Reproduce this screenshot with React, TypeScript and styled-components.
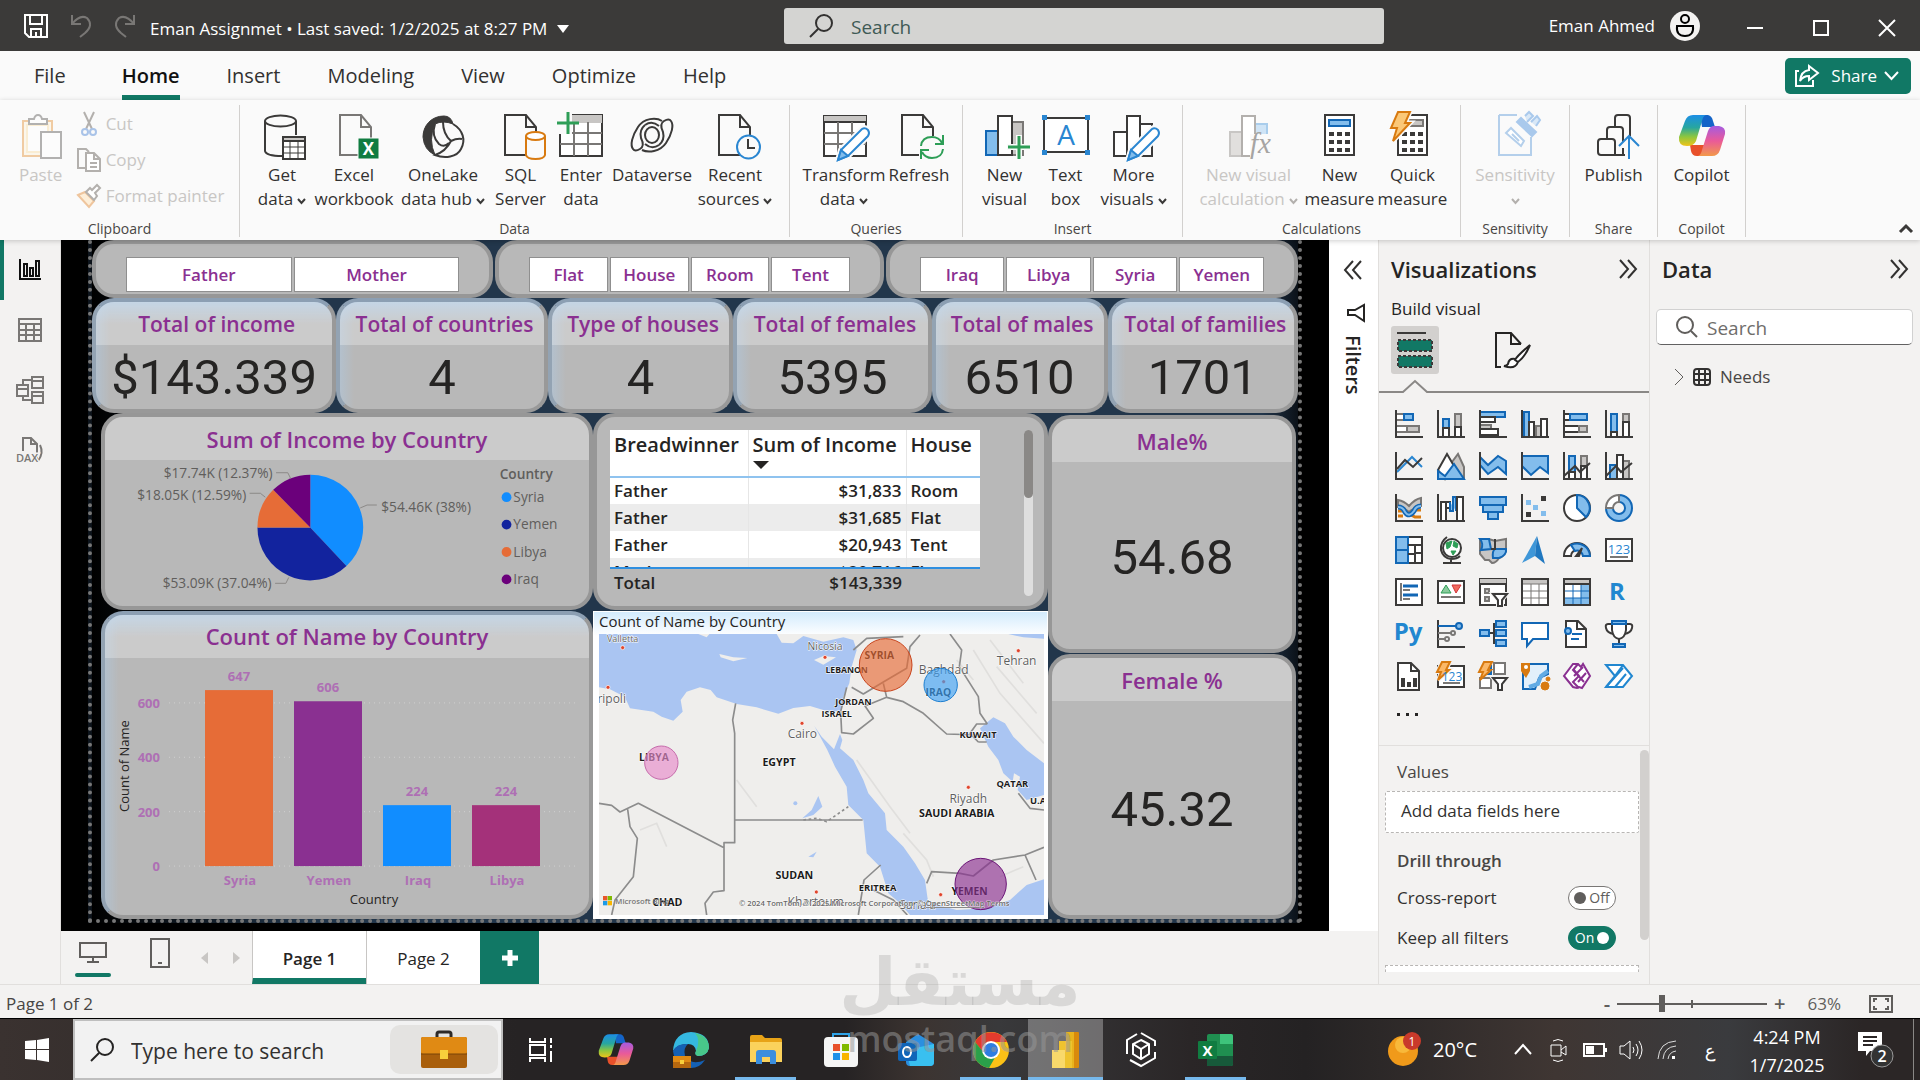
import React from 'react';
import styled, { createGlobalStyle, css } from 'styled-components';

const INK = '#3b3a39';
const BLUE = '#1267b5';
const SKY = '#83bdec';
const GREY = '#797775';
const SILVER = '#c8c6c4';
const GREEN = '#117865';
const PURPLE = '#8a3091';
const ORANGE = '#d87a10';

const GlobalStyle = createGlobalStyle`
  *, *::before, *::after { box-sizing: border-box; }
  body { margin: 0; background: #f3f2f1; }
  body, button, input, table { font-family: 'Open Sans', 'Noto Sans', 'DejaVu Sans', sans-serif; }
  button { border: 0; padding: 0; background: none; color: inherit; font-size: inherit; cursor: pointer; }
  svg { display: block; overflow: visible; flex: none; }
`;

/* ---------- drawing helpers ---------- */

type Shape = [d: string, fill?: string, stroke?: string, width?: number];

const Shapes = ({ list, width = 2 }: { list: Shape[]; width?: number }) => (
  <>
    {list.map(([d, fill, stroke, w], i) => (
      <path key={i} d={d} fill={fill || 'none'} stroke={stroke || INK} strokeWidth={w ?? width} />
    ))}
  </>
);

const Icon = ({ w, h, box, list, width, children }: { w: number; h: number; box?: string; list?: Shape[]; width?: number; children?: React.ReactNode }) => (
  <svg width={w} height={h} viewBox={box || `0 0 ${w} ${h}`} aria-hidden="true">
    {list && <Shapes list={list} width={width} />}
    {children}
  </svg>
);

/* ---------- shell ---------- */

const Shell = styled.div`
  position: relative;
  min-height: 100vh;
  display: flex;
  flex-direction: column;
  color: #252423;
  font-size: 17px;
  line-height: 24px;
  overflow: hidden;
`;

const TitleBar = styled.header`
  height: 51px;
  background: ${INK};
  color: #fff;
  display: grid;
  grid-template-columns: 784fr 600fr 536fr;
  align-items: center;
`;

const TitleLeft = styled.div`
  display: flex;
  align-items: center;
  gap: 22px;
  padding-left: 24px;
`;

const FileName = styled.button`
  display: flex;
  align-items: center;
  gap: 10px;
  margin-left: -8px;
  padding-top: 6px;
  font-size: 17px;
  white-space: nowrap;
`;

const TitleSearch = styled.label`
  height: 36px;
  border-radius: 3px;
  background: #d4d4d2;
  display: flex;
  align-items: center;
  gap: 18px;
  padding-left: 25px;
`;

const PlainInput = styled.input<{ $size: number; $tone: string }>`
  flex: 1;
  min-width: 0;
  border: 0;
  outline: 0;
  background: transparent;
  padding: 2px 0 0;
  font-size: ${p => p.$size}px;
  color: ${p => p.$tone};
  &::placeholder { color: ${p => p.$tone}; opacity: 1; }
`;

const TitleRight = styled.div`
  display: flex;
  justify-content: flex-end;
  align-items: center;
`;

const Account = styled.button`
  display: flex;
  align-items: center;
  gap: 15px;
  margin-right: 22px;
`;

const WindowButton = styled.button`
  width: 66px;
  height: 51px;
  padding-top: 4px;
  display: grid;
  place-items: center;
`;

/* ---------- ribbon ---------- */

const TabRow = styled.nav`
  height: 49px;
  background: #fafafa;
  display: flex;
  align-items: center;
  padding: 0 9px 0 34px;
`;

const TabList = styled.div`
  flex: 1;
  display: flex;
  gap: 47px;
`;

const RibbonTab = styled.button<{ $active?: boolean }>`
  height: 49px;
  padding-top: 5px;
  font-size: 20px;
  color: ${p => (p.$active ? '#111' : '#323130')};
  font-weight: ${p => (p.$active ? 600 : 400)};
  border-bottom: 5px solid ${p => (p.$active ? GREEN : 'transparent')};
  &:first-child { margin-right: 9px; }
`;

const ShareButton = styled.button`
  height: 36px;
  padding: 0 12px 0 10px;
  border-radius: 5px;
  background: ${GREEN};
  color: #fff;
  display: flex;
  align-items: center;
  gap: 7px;
  span { margin-left: 5px; }
`;

const Ribbon = styled.section`
  position: relative;
  z-index: 1;
  height: 140px;
  padding: 5px 0 3px;
  background: #fafafa;
  display: flex;
  box-shadow: 0 1px 5px rgba(0, 0, 0, 0.2);
`;

const Group = styled.div<{ $width: number }>`
  width: ${p => p.$width}px;
  border-right: 1px solid #d2d0ce;
  display: flex;
  flex-direction: column;
  align-items: center;
  justify-content: space-between;
`;

const GroupItems = styled.div`
  display: flex;
  padding-top: 7px;
`;

const GroupName = styled.div`
  font-size: 14px;
  line-height: 16px;
  color: #484644;
`;

const Command = styled.button<{ $width: number; $off?: boolean }>`
  width: ${p => p.$width}px;
  display: flex;
  flex-direction: column;
  align-items: center;
  font-size: 17px;
  line-height: 24px;
  color: ${p => (p.$off ? '#c8c6c4' : '#323130')};
  svg { margin-bottom: 3px; }
  span { white-space: nowrap; display: flex; align-items: center; gap: 4px; min-height: 24px; }
  span svg { margin: 3px 0 0; }
`;

const SmallCommands = styled.div`
  display: flex;
  flex-direction: column;
  gap: 12px;
  padding: 0 0 0 10px;
`;

const SmallCommand = styled.button`
  display: flex;
  align-items: center;
  gap: 5px;
  line-height: 24px;
  color: #c8c6c4;
`;

const Collapse = styled.button`
  margin: auto 7px 4px auto;
`;

/* ---------- workspace ---------- */

const Workspace = styled.main`
  flex: 1;
  display: grid;
  grid-template-columns: 61px minmax(0, 1fr) 271px 271px;
  background: #f3f2f1;
`;

const Rail = styled.nav`
  border-right: 1px solid #e1dfdd;
  display: flex;
  flex-direction: column;
`;

const RailButton = styled.button<{ $active?: boolean }>`
  height: 60px;
  border-left: 4px solid ${p => (p.$active ? GREEN : 'transparent')};
  padding-right: 4px;
  display: grid;
  place-items: center;
`;

const Center = styled.div`
  display: flex;
  flex-direction: column;
`;

const CanvasRow = styled.div`
  flex: 1;
  display: flex;
`;

const Canvas = styled.div`
  flex: 1;
  background: #000;
  padding: 0 27px 8px;
  display: flex;
`;

const ReportPage = styled.div`
  flex: 1;
  border: 4px dotted #777;
  border-top: 0;
  background: linear-gradient(90deg, #000 0, #22364b 18%, #22364b 97%, #0b1118 100%);
  display: flex;
  flex-direction: column;
`;

const FiltersPane = styled.aside`
  width: 49px;
  background: #fff;
  display: flex;
  flex-direction: column;
  align-items: center;
  gap: 20px;
  padding: 20px 2px 0 0;
`;

const VerticalLabel = styled.div`
  writing-mode: vertical-rl;
  font-size: 20px;
  font-weight: 600;
  margin-top: -7px;
`;

const FunnelSlot = styled.div`
  padding: 4px 0 0 6px;
`;

/* ---------- report cards ---------- */

const Row = styled.div<{ $height: number; $gap?: number }>`
  height: ${p => p.$height}px;
  display: flex;
  gap: ${p => p.$gap || 0}px;
`;

const glow = css`
  background-image: linear-gradient(180deg, rgba(172, 205, 236, 0.7), rgba(172, 205, 236, 0) 22px),
    linear-gradient(90deg, rgba(172, 205, 236, 0.4), rgba(172, 205, 236, 0) 14px);
  border-color: #8c9fb3 #999 #999 #93a3b3;
`;

const Card = styled.section<{ $grow: number; $glow?: boolean }>`
  flex: ${p => p.$grow} 1 0;
  min-width: 0;
  min-height: 0;
  border: 4px solid #979797;
  border-radius: 22px;
  background-color: #b8b8b8;
  display: flex;
  flex-direction: column;
  overflow: hidden;
  ${p => p.$glow && glow}
`;

const CardTitle = styled.h2<{ $compact?: boolean }>`
  margin: 0;
  padding-left: ${p => (p.$compact ? 5 : 0)}px;
  height: 43px;
  flex: none;
  display: grid;
  place-items: center;
  background: rgba(255, 255, 255, 0.27);
  color: ${PURPLE};
  font-size: ${p => (p.$compact ? 21 : 22)}px;
  line-height: 28px;
  font-weight: 600;
  white-space: nowrap;
`;

const Figure = styled.div<{ $tall?: boolean }>`
  flex: 1;
  display: grid;
  place-items: center;
  padding-top: ${p => (p.$tall ? 4 : 1)}px;
  font-family: Roboto, 'Open Sans', sans-serif;
  font-size: 49px;
  line-height: 52px;
  color: #252423;
`;

const Slicer = styled.div<{ $inset: number }>`
  display: flex;
  gap: 2px;
  padding: 13px ${p => p.$inset}px 0;
`;

const SlicerButton = styled.button`
  flex: 1;
  height: 35px;
  background: #fff;
  border: 1px solid #8f8f8f;
  color: ${PURPLE};
  font-size: 17px;
  font-weight: 600;
`;

const Board = styled.div`
  flex: 1;
  display: flex;
  padding: 0 2px 0 9px;
`;

const Column = styled.div<{ $grow: number; $top?: number }>`
  flex: ${p => p.$grow} 1 0;
  min-width: 0;
  display: flex;
  flex-direction: column;
  gap: 1px;
  padding-top: ${p => p.$top || 0}px;
`;

const Chart = styled.svg`
  flex: 1;
  min-height: 0;
  width: 100%;
  text { font-family: 'Open Sans', 'Noto Sans', sans-serif; }
`;

const TableBody = styled.div`
  flex: 1;
  display: flex;
  align-items: flex-start;
  justify-content: space-between;
  padding: 13px 11px 0 13px;
`;

const DataTable = styled.table`
  width: 370px;
  border-collapse: collapse;
  font-weight: 600;
  font-size: 17px;
  line-height: 24px;
  text-align: left;
  th { font-size: 20px; font-weight: 600; vertical-align: top; height: 47px; padding: 3px 4px 0; background: #fff; border-bottom: 2px solid #8fc3ef; line-height: 24px; white-space: nowrap; }
  th svg { margin: 4px 0 0; }
  td { height: 27px; padding: 0 4px; background: #fff; }
  tbody tr:nth-child(even) td { background: #ececec; }
  td + td, th + th { border-left: 1px solid #e6e6e6; }
  td:nth-child(2) { text-align: right; }
  tfoot td { background: transparent; border: 0 !important; height: 28px; }
`;

const Clipped = styled.div`
  height: 9px;
  line-height: 28px;
  overflow: hidden;
`;

const LastRow = styled.tr`
  td { height: 10px; border-bottom: 2px solid #2f8fe0; }
`;

const ScrollTrack = styled.div<{ $w: number; $tone: string }>`
  width: ${p => p.$w}px;
  border-radius: 5px;
  background: ${p => p.$tone};
`;

const TableTrack = styled(ScrollTrack)`
  height: 166px;
`;

const Thumb = styled.div<{ $h: number; $tone: string }>`
  height: ${p => p.$h}px;
  border-radius: 5px;
  background: ${p => p.$tone};
`;

const MapCard = styled.section`
  flex: 311 1 0;
  min-height: 0;
  background: linear-gradient(180deg, #d3ebfd, #fff 24px);
  border: 1px solid #fff;
  padding: 0 3px 3px 5px;
  display: flex;
  flex-direction: column;
  h2 { margin: 0; padding-bottom: 4px; font-size: 15px; line-height: 18px; font-weight: 400; }
`;

const MapArt = styled.svg`
  flex: 1;
  min-height: 0;
  width: 100%;
  overflow: hidden;
  text { font-family: 'Open Sans', 'Noto Sans', sans-serif; }
`;

/* ---------- page tabs and status ---------- */

const PageTabs = styled.nav`
  height: 53px;
  display: flex;
  align-items: stretch;
`;

const Layouts = styled.div`
  display: flex;
  gap: 31px;
  padding: 0 10px 0 14px;
`;

const ViewButton = styled.button<{ $active?: boolean }>`
  width: 36px;
  padding-top: 7px;
  display: flex;
  flex-direction: column;
  align-items: center;
  justify-content: space-between;
  &::after { content: ''; width: 36px; height: 4px; margin-bottom: 7px; border-radius: 2px; background: ${p => (p.$active ? GREEN : 'transparent')}; }
`;

const Pager = styled.button`
  width: 32px;
  display: grid;
  place-items: center;
`;

const PageTab = styled.button<{ $active?: boolean }>`
  width: 114px;
  background: #fff;
  border-left: 1px solid #c8c6c4;
  padding-top: ${p => (p.$active ? 8 : 2)}px;
  font-weight: ${p => (p.$active ? 600 : 400)};
  border-bottom: ${p => (p.$active ? `6px solid ${GREEN}` : 0)};
`;

const AddPage = styled.button`
  width: 59px;
  background: ${GREEN};
  display: grid;
  place-items: center;
`;

const StatusBar = styled.footer`
  height: 35px;
  border-top: 1px solid #e1dfdd;
  border-bottom: 1px solid #000;
  background: #f3f2f1;
  display: flex;
  align-items: center;
  padding: 4px 27px 0 6px;
  color: #484644;
`;

const ZoomTools = styled.div`
  margin-left: auto;
  display: flex;
  align-items: center;
  gap: 7px;
  color: #605e5c;
  button { font-size: 20px; font-weight: 600; }
  output { margin: 0 21px 0 15px; }
`;

const ZoomSlider = styled.input`
  appearance: none;
  width: 150px;
  height: 17px;
  margin: 0;
  background: linear-gradient(#605e5c, #605e5c) 50% 50% / 100% 2px no-repeat,
    linear-gradient(#605e5c, #605e5c) 50% 50% / 2px 8px no-repeat;
  &::-webkit-slider-thumb { appearance: none; width: 6px; height: 17px; background: #605e5c; }
`;

/* ---------- side panes ---------- */

const Pane = styled.aside`
  border-left: 1px solid #e1dfdd;
  display: flex;
  flex-direction: column;
`;

const PaneHead = styled.div`
  display: flex;
  align-items: center;
  justify-content: space-between;
  padding: 14px 12px 0;
  h2 { margin: 0; font-size: 22px; line-height: 30px; font-weight: 600; }
`;

const BuildLabel = styled.div`
  padding: 13px 12px 5px;
`;

const ModeButtons = styled.div`
  display: flex;
  gap: 50px;
  padding-left: 12px;
`;

const ModeButton = styled.button<{ $active?: boolean }>`
  width: 48px;
  height: 48px;
  border-radius: 3px;
  background: ${p => (p.$active ? '#d2d0ce' : 'transparent')};
  display: grid;
  place-items: center;
`;

const Gallery = styled.div`
  display: grid;
  grid-template-columns: repeat(6, 28px);
  gap: 14px;
  padding: 23px 0 0 16px;
`;

const Dots = styled.button`
  align-self: flex-start;
  margin: 23px 0 28px 18px;
`;

const Wells = styled.div`
  flex: 1;
  border-top: 1px solid #e1dfdd;
  display: flex;
  justify-content: space-between;
  padding: 4px 0 12px 6px;
`;

const WellList = styled.div`
  width: 254px;
  display: flex;
  flex-direction: column;
  color: #323130;
  overflow: hidden;
`;

const WellLabel = styled.div<{ $strong?: boolean }>`
  padding: ${p => (p.$strong ? '16px 12px 13px' : '10px 12px 7px')};
  font-weight: ${p => (p.$strong ? 600 : 400)};
  color: #484644;
`;

const DropBox = styled.div`
  height: 42px;
  border: 1px dashed #b8b6b4;
  border-radius: 2px;
  background: #fff;
  padding: 7px 15px;
`;

const CutBox = styled.div`
  height: 7px;
  margin-top: 15px;
  border: 1px dashed #b8b6b4;
  border-bottom: 0;
  background: #fff;
`;

const ToggleRow = styled.label`
  height: 24px;
  margin-bottom: 16px;
  padding: 0 23px 0 12px;
  display: flex;
  align-items: center;
  justify-content: space-between;
  & + & { margin-bottom: 0; }
`;

const ToggleInput = styled.input`
  position: absolute;
  opacity: 0;
`;

const Toggle = styled.span<{ $on?: boolean }>`
  width: 48px;
  height: 24px;
  border-radius: 12px;
  border: 1px solid ${p => (p.$on ? GREEN : '#797775')};
  background: ${p => (p.$on ? GREEN : '#fff')};
  color: ${p => (p.$on ? '#fff' : '#605e5c')};
  font-size: 14px;
  line-height: 20px;
  display: flex;
  flex-direction: ${p => (p.$on ? 'row-reverse' : 'row')};
  align-items: center;
  justify-content: center;
  gap: 3px;
  &::before { content: ''; width: 12px; height: 12px; border-radius: 50%; background: ${p => (p.$on ? '#fff' : '#605e5c')}; }
`;

const SearchField = styled.label`
  margin: 25px 7px 20px 6px;
  height: 36px;
  border: 1px solid #d1d1d1;
  border-bottom-color: #616161;
  border-radius: 5px;
  background: #fff;
  display: flex;
  align-items: center;
  gap: 8px;
  padding-left: 18px;
`;

const TreeItem = styled.button`
  display: flex;
  align-items: center;
  gap: 9px;
  padding-left: 24px;
  line-height: 24px;
  color: #484644;
`;

/* ---------- taskbar ---------- */

const Taskbar = styled.footer`
  height: 61px;
  background: linear-gradient(90deg, #3a3230 0, #262324 27%, #262324 44%, #3c3431 48%, #39393b 52%, #2a2627 62%, #242223 68%, #3f3633 81%, #3a3b3e 90%, #2b2626 97%);
  color: #fff;
  display: flex;
`;

const StartButton = styled.button`
  width: 73px;
  display: grid;
  place-items: center;
`;

const TaskSearch = styled.label`
  width: 430px;
  background: #f2f2f2;
  border: 2px solid #bfbfbf;
  display: flex;
  align-items: center;
  gap: 17px;
  padding: 0 3px 0 15px;
`;

const Briefcase = styled.span`
  width: 108px;
  height: 49px;
  border-radius: 10px;
  background: #e4e3e1;
  display: grid;
  place-items: center;
`;

const TaskButton = styled.button<{ $open?: boolean; $current?: boolean }>`
  width: 75px;
  display: grid;
  place-items: center;
  position: relative;
  background: ${p => (p.$current ? 'rgba(255,255,255,0.3)' : 'transparent')};
  &::after {
    content: '';
    position: absolute;
    bottom: 0;
    left: ${p => (p.$current ? 0 : 7)}px;
    right: ${p => (p.$current ? 0 : 7)}px;
    height: 3px;
    background: ${p => (p.$open ? '#76b9ed' : 'transparent')};
  }
`;

const Tray = styled.div`
  margin-left: auto;
  display: flex;
  align-items: center;
`;

const Weather = styled.button`
  display: flex;
  align-items: center;
  gap: 12px;
  margin-right: 28px;
  font-size: 20px;
`;

const TrayButton = styled.button`
  width: 36px;
  height: 61px;
  display: grid;
  place-items: center;
  font-size: 18px;
`;

const TrayLanguage = styled(TrayButton)`
  width: 50px;
`;

const Clock = styled.button`
  width: 104px;
  padding-top: 2px;
  font-size: 18px;
  line-height: 28px;
`;

const Notify = styled.button`
  width: 75px;
  height: 61px;
  display: grid;
  place-items: center;
  border-right: 1px solid #8a8886;
  margin-right: 6px;
`;

const Watermark = styled.div`
  position: absolute;
  left: 50%;
  bottom: 22px;
  transform: translateX(-50%);
  display: flex;
  flex-direction: column;
  align-items: center;
  pointer-events: none;
  color: rgba(140, 140, 140, 0.25);
  font-weight: 700;
  font-family: 'DejaVu Sans', sans-serif;
  font-size: 66px;
  line-height: 74px;
  z-index: 3;
  b { font-family: 'Open Sans', sans-serif; font-size: 36px; line-height: 38px; font-weight: 600; color: rgba(150, 150, 150, 0.55); }
`;

/* ---------- ribbon icons ---------- */

const doc = (x: number): string => `M${x} 3H${x + 21}L${x + 31} 15V43H${x}ZM${x + 21} 3V15H${x + 31}`;
const PENCIL: Shape[] = [
  ['M18 48L21 38L42 17Q45 15 48 18Q50 21 48 24L28 44Z', '#fff', '#fafafa', 6],
  ['M18 48L21 38L42 17Q45 15 48 18Q50 21 48 24L28 44Z', '#fff', '#2a86d1'],
  ['M18 48L21 38L28 44Z', SKY, '#2a86d1'],
];
const KEYS = 'M13 20h5v4h-5zM21 20h5v4h-5zM29 20h5v4h-5zM13 28h5v4h-5zM21 28h5v4h-5zM29 28h5v4h-5zM13 36h5v4h-5zM21 36h5v4h-5zM29 36h5v4h-5z';
const BOLT = 'M9 0H21L16 11H21L4 29L8 16H2Z';

const CopilotArt = ({ id }: { id: string }) => (
  <>
    <defs>
      <linearGradient id={`${id}a`} x1="0" y1="0" x2="0" y2="1">
        <stop offset="0" stopColor="#1c8ee6" /><stop offset="0.4" stopColor="#27a6a0" /><stop offset="0.7" stopColor="#8cc63f" /><stop offset="1" stopColor="#f0c419" />
      </linearGradient>
      <linearGradient id={`${id}b`} x1="0" y1="0" x2="0" y2="1">
        <stop offset="0" stopColor="#a55be0" /><stop offset="0.5" stopColor="#ea5a98" /><stop offset="1" stopColor="#f2994a" />
      </linearGradient>
    </defs>
    <path d="M12 33H30L27 41Q26 44 22 44H19Q14 44 13 39Z" fill="#e8502a" />
    <path d="M22 3H30Q34 4 35 9L37 15H24Z" fill="#1464c8" />
    <path d="M28 3Q25 4 24 9L18 29Q16 34 9 34Q0 34 1 25L7 9Q9 3 15 3Z" fill={`url(#${id}a)`} />
    <path d="M20 44Q23 43 24 38L30 19Q32 14 36 14H41Q48 15 47 22L42 38Q40 44 34 44Z" fill={`url(#${id}b)`} />
  </>
);

const RIBBON: Record<string, React.ReactNode> = {
  getData: <Shapes list={[
    ['M7 9V39Q8 44 24 44M38 9V23'], ['M7 9A15.500 5.500 0 0 1 38 9A15.500 5.500 0 0 1 7 9Z'],
    ['M25 25H47V47H25Z', '#fff'], ['M25 25H47V29H25Z', SILVER], ['M32 29V47M40 29V47M25 35H47M25 41H47', '', INK, 1],
  ]} />,
  excel: <><Shapes list={[[doc(10), '', GREY]]} /><rect x="28" y="26" width="21" height="21" fill="#107c41" stroke="#fafafa" /><text x="38.500" y="43" textAnchor="middle" fontSize="17" fontWeight="700" fill="#fff">X</text></>,
  onelake: <Shapes list={[
    ['M25 4C12 4 4 14 4 25Q5 38 16 43Q9 28 16 12Q24 8 34 12Q32 4 25 4Z', INK, INK, 1],
    ['M34 12C44 18 47 28 42 37C38 45 26 47 16 43C22 41 28 37 32 29Q38 26 43 27M16 12Q12 24 20 32Q25 36 30 31M24 10Q24 22 32 29'],
  ]} />,
  sql: <Shapes list={[[doc(8)], ['M29 24V43Q30 47 38.500 47Q47 47 48 43V24', '#fafafa', ORANGE], ['M29 24A9.500 4 0 0 1 48 24A9.500 4 0 0 1 29 24Z', '#fff', ORANGE]]} />,
  enter: <Shapes list={[
    ['M3 3H45V44H3Z', '#fff'], ['M4 4H44V10H4Z', SILVER, SILVER], ['M17 10V44M31 10V44M3 21H45M3 32H45', '', GREY],
    ['M0 0H15V22H0Z', '#fafafa', '#fafafa', 0], ['M11 0V22M0 11H22', '', '#2e9e57', 3],
  ]} />,
  dataverse: <Shapes list={[
    ['M14 38C20 41 32 40 38 31C44 22 46 13 43 9Q41 6 36 9Q31 12 35 20Q37 28 31 33'],
    ['M34 9C28 5 16 6 10 15C4 24 2 33 5 37Q7 40 12 37Q17 34 13 26Q11 18 17 13'],
    ['M17 13Q24 8 31 14M31 33Q24 38 17 32'],
    ['M17 23A7 8 0 0 1 31 23A7 8 0 0 1 17 23Z'],
  ]} />,
  recent: <Shapes list={[[doc(8)], ['M26 35A11 11 0 0 1 49 35A11 11 0 0 1 26 35Z', '#fafafa', '#2a86d1'], ['M37 27V36H44']]} />,
  transform: <Shapes list={[['M4 4H46V44H4Z', '#fff'], ['M5 5H45V10H5Z', SILVER, SILVER], ['M4 10H46'], ['M18 10V44M32 10V44M4 21H46M4 32H46', '', GREY], ...PENCIL]} />,
  refresh: <><Shapes list={[[doc(7)], ['M24 24H50V47H24Z', '#fafafa', '#fafafa', 0], ['M26 34Q27 25 37 25Q44 25 47 31M48 23V32H40M48 37Q47 46 37 46Q30 46 27 40M26 47V38H34', '', '#2e9e57']]} /></>,
  newVisual: <Shapes list={[['M5 19H18V43H5Z', SKY, BLUE], ['M31 10H42V43H31Z', SILVER, GREY], ['M17 4H31V43H17Z', '#fff'], ['M38 23V48M26 35H50', '', '#fafafa', 6], ['M38 24V47M27 35H49', '', '#2e9e57', 3]]} />,
  textBox: <><Shapes list={[['M2 6H46V40H2Z', '#fff'], ['M1 4h3v3h-3zM44 4h3v3h-3zM1 39h3v3h-3zM44 39h3v3h-3z', '#2a86d1', '#2a86d1']]} /><text x="24" y="33" textAnchor="middle" fontSize="28" fill="#2a86d1">A</text></>,
  more: <Shapes list={[['M4 20H17V44H4Z', '#fff'], ['M30 12H42V44H30Z', '#fff'], ['M17 4H30V44H17Z', '#fff'], ...PENCIL]} />,
  visualCalc: <><Shapes list={[['M5 20H17V44H5Z', '#e1dfdd', SILVER], ['M30 12H42V26H30Z', '#cfe4f6', '#a9cdec'], ['M17 4H30V44H17Z', '#fff', '#b3b0ad']]} /><rect x="25" y="22" width="24" height="26" fill="#fafafa" /><text x="25" y="41" fontSize="29" fontStyle="italic" fontFamily="Liberation Serif, serif" fill="#a6a4a2">fx</text></>,
  calc: <Shapes list={[['M9 3H38V43H9Z', '#fff'], ['M13 8H34V14H13Z', SKY, BLUE], [KEYS, INK, INK, 0]]} />,
  quick: <Shapes list={[['M9 3H38V43H9Z', '#fff'], ['M13 8H34V14H13Z', SILVER, GREY], [KEYS, INK, INK, 0], [BOLT, '#fafafa', '#fafafa', 5], [BOLT, '#fbc878', ORANGE]]} />,
  sensitivity: <Shapes list={[['M8 3H26M40 25V43H8V3', '#fafafa', '#b4cfeb'], ['M15 21L20 16L33 29L30 34Z', '#fff', '#b4cfeb'], ['M21 22L28 29', '', '#b4cfeb'], ['M26 10L30 6L45 20L41 24Z', '#a9c9ec', '#a9c9ec'], ['M34 4L38 0L42 4L36 10M40 10L46 4L49 8L45 14', '#d9e8f7', '#a9c9ec']]} />,
  publish: <Shapes list={[['M25 15V6Q25 3 28 3H37Q40 3 40 6V24M17 27V18Q17 15 20 15H30Q33 15 33 18V30M25 43V30Q25 27 22 27H11Q8 27 8 30V40Q8 43 11 43H35M33 36V43'], ['M39 47V25M29 34L39 24L49 34', '', '#2a86d1']]} />,
  copilot: <CopilotArt id="rb" />,
  paste: <g opacity="0.55"><Shapes list={[['M6 9H35V44H6Z', '#fdf3e0', '#e9a55b'], ['M10 13H31V40H10Z', '#fff', '#fbe3b5'], ['M12 12V7H17Q18 3 21 3Q24 3 25 7H30V12Z', '#fff', GREY], ['M24 20H44V46H24Z', '#fff', GREY]]} /></g>,
};

type Cmd = [icon: string, width: number, lines: string[], caret?: boolean, off?: boolean];
const GROUPS: { name: string; width: number; cmds: Cmd[] }[] = [
  { name: 'Data', width: 550, cmds: [['getData', 60, ['Get', 'data'], true], ['excel', 84, ['Excel', 'workbook']], ['onelake', 94, ['OneLake', 'data hub'], true], ['sql', 61, ['SQL', 'Server']], ['enter', 60, ['Enter', 'data']], ['dataverse', 82, ['Dataverse']], ['recent', 84, ['Recent', 'sources'], true]] },
  { name: 'Queries', width: 173, cmds: [['transform', 86, ['Transform', 'data'], true], ['refresh', 64, ['Refresh']]] },
  { name: 'Insert', width: 220, cmds: [['newVisual', 60, ['New', 'visual']], ['textBox', 62, ['Text', 'box']], ['more', 74, ['More', 'visuals'], true]] },
  { name: 'Calculations', width: 278, cmds: [['visualCalc', 112, ['New visual', 'calculation'], true, true], ['calc', 70, ['New', 'measure']], ['quick', 76, ['Quick', 'measure']]] },
  { name: 'Sensitivity', width: 109, cmds: [['sensitivity', 100, ['Sensitivity', ''], true, true]] },
  { name: 'Share', width: 88, cmds: [['publish', 80, ['Publish']]] },
  { name: 'Copilot', width: 88, cmds: [['copilot', 80, ['Copilot']]] },
];

const Caret = ({ tone = INK }: { tone?: string }) => <Icon w={9} h={6} list={[['M1 1L4.500 5L8 1', '', tone]]} />;

const CommandView = ({ cmd }: { cmd: Cmd }) => {
  const [icon, width, lines, caret, off] = cmd;
  return (
    <Command $width={width} $off={off}>
      <Icon w={48} h={48}>{RIBBON[icon]}</Icon>
      {lines.map((line, i) => (
        <span key={i}>{line}{caret && i === lines.length - 1 && <Caret tone={off ? '#b3b0ad' : INK} />}</span>
      ))}
    </Command>
  );
};

/* ---------- visual gallery ---------- */

const AX: Shape = ['M1 0V27H28'];
const W = '#fff';
const FRAME: Shape = ['M1 3H27V25H1Z', W];
const SBOLT = 'M5 0H13L9 8H12L1 18L4 10H0Z';
const SFUNNEL: Shape[] = [['M14 16H28L23 22V28H19V22Z', W, '#f3f2f1', 4], ['M14 16H28L23 22V28H19V22Z', W]];

const GALLERY: { name: string; list?: Shape[]; extra?: React.ReactNode }[] = [
  { name: 'Stacked bar chart', list: [['M1 4H9V10H1Z', W, GREY], ['M9 4H18V10H9Z', SKY, BLUE], ['M1 16H12V22H1Z', W, GREY], ['M12 16H24V22H12Z', SILVER, GREY], AX] },
  { name: 'Stacked column chart', list: [['M6 9H12V18H6Z', SKY, BLUE], ['M6 18H12V27H6Z', W], ['M18 4H24V17H18Z', SILVER, GREY], ['M18 17H24V27H18Z', W], AX] },
  { name: 'Clustered bar chart', list: [['M1 2H26V7H1Z', SKY, BLUE], ['M1 7H16V12H1Z', W], ['M1 15H12V19H1Z', SILVER, GREY], ['M1 19H19V25H1Z', W], AX] },
  { name: 'Clustered column chart', list: [['M3 2H8V27H3Z', SKY, BLUE], ['M8 12H13V27H8Z', W], ['M15 16H20V27H15Z', SILVER, GREY], ['M20 9H26V27H20Z', W], AX] },
  { name: '100% stacked bar chart', list: [['M1 4H7V10H1Z', W], ['M7 4H24V10H7Z', SKY, BLUE], ['M1 16H16V22H1Z', W], ['M16 16H24V22H16Z', SILVER, GREY], AX] },
  { name: '100% stacked column chart', list: [['M6 4H12V22H6Z', SKY, BLUE], ['M6 22H12V27H6Z', W], ['M18 4H24V12H18Z', SILVER, GREY], ['M18 12H24V27H18Z', W], AX] },
  { name: 'Line chart', list: [['M2 20L17 5L27 15', '', '#2a86d1'], ['M2 17L10 8L18 15L27 6'], AX] },
  { name: 'Area chart', list: [['M12 14L21 2L27 15V27H12Z', SILVER, GREY], ['M1 18L10 2L17 14L8 27Z', W], ['M1 19L8 24L17 12L27 27H1Z', SKY, BLUE]] },
  { name: 'Stacked area chart', list: [['M1 5L9 13L19 4L27 9V22L19 15L9 22L1 13Z', SKY, BLUE], AX] },
  { name: '100% stacked area chart', list: [['M1 4H27V21L19 15L10 23L1 14Z', SKY, BLUE], AX] },
  { name: 'Line and stacked column chart', list: [['M6 4H12V20H6Z', SKY, BLUE], ['M6 20H12V27H6Z', W], ['M18 4H24V14H18Z', SILVER, GREY], ['M18 14H24V27H18Z', W], ['M1 24L12 14L17 20L27 11'], AX] },
  { name: 'Line and clustered column chart', list: [['M5 13H12V27H5Z', SKY, BLUE], ['M18 9H24V27H18Z', SILVER, GREY], ['M12 3H18V27H12Z', W], ['M1 24L11 14L16 20L27 11'], AX] },
  { name: 'Ribbon chart', list: [['M3 17H9L20 23H26M3 22H8M19 16H26', '', ORANGE, 3], ['M3 6Q9 7 14 12Q20 5 26 4V12Q20 13 14 18Q8 13 3 13Z', SILVER, GREY], ['M3 13Q8 13 10 18Q14 24 19 17Q21 12 26 12', '', BLUE, 5], ['M3 13Q8 13 10 18Q14 24 19 17Q21 12 26 12', '', SKY, 2], AX] },
  { name: 'Waterfall chart', list: [['M4 8H9V27H4Z', W], ['M9 8H13V14H9Z', W], ['M13 8V17H16V3H19V17', SKY, BLUE], ['M20 3H26V27H20Z', W], AX] },
  { name: 'Funnel chart', list: [['M1 3H27V11H1Z', SKY, BLUE], ['M4 11H24V18H4Z', SKY, BLUE], ['M9 18H19V25H9Z', SKY, BLUE]] },
  { name: 'Scatter chart', list: [AX, ['M20 2h5v5h-5zM5 18h5v5h-5z', INK, INK, 0], ['M5 6h5v5h-5zM12 11h5v5h-5zM20 17h5v5h-5z', SKY, SKY, 0]] },
  { name: 'Pie chart', list: [['M1 14A13 13 0 0 1 27 14A13 13 0 0 1 1 14Z', W], ['M14 1A13 13 0 0 1 23 23L14 14Z', SKY, BLUE]] },
  { name: 'Donut chart', list: [['M14 1A13 13 0 1 1 1 14H8A6 6 0 1 0 14 8Z', SKY, BLUE], ['M14 1A13 13 0 0 0 1 14H8A6 6 0 0 1 14 8Z', W, GREY]] },
  { name: 'Treemap', list: [['M1 1H27V27H1Z', W], ['M1 1H13V27H1Z', SKY, BLUE], ['M1 14H13', '', BLUE], ['M13 9H27M20 9V27M13 18H20M20 17H27']] },
  { name: 'Map', list: [['M6 12A9 9 0 0 1 24 12A9 9 0 0 1 6 12Z', W], ['M9 7L15 5L13 11L10 13ZM17 5L21 8L20 12L16 10ZM14 15L19 15L16 19Z', '#2e9e57', '#2e9e57', 1], ['M10 1Q3 6 4 14Q6 22 14 23Q20 23 23 20M14 23V27M6 27H24']] },
  { name: 'Filled map', list: [['M1 3L10 3L16 5L27 3V15Q24 21 20 22Q17 27 13 27L10 24H6L1 18Z', SILVER, GREY], ['M1 3L10 3L12 13L2 14Q5 8 1 3Z', SKY, BLUE], ['M16 13H27Q28 19 20 22L14 22Q13 15 16 13Z', SKY, BLUE], ['M12 13H16V3']] },
  { name: 'Azure map', list: [['M16 0L1 27L14 20Z', '#3f97d8', '#3f97d8', 0], ['M16 0L24 28L14 20Z', '#2078c0', '#2078c0', 0]] },
  { name: 'Gauge', list: [['M1 20A13 13 0 0 1 27 20H20A6 6 0 0 0 8 20Z', W], ['M8 9A13 13 0 0 1 27 20H20A6 6 0 0 0 12 15Z', SKY, BLUE], ['M13 20L19 12L16 20Z', INK]] },
  { name: 'Card', list: [FRAME, ['M5 21H23', '', GREY]], extra: <text x="14" y="18" textAnchor="middle" fontSize="13" fill="#2a86d1">123</text> },
  { name: 'Multi-row card', list: [['M1 1H27V27H1Z', W], ['M6 5V23M8 12H15M8 21H15', '', GREY], ['M8 8H23M8 17H23', '', BLUE, 3]] },
  { name: 'KPI', list: [FRAME, ['M4 15L9 7L14 15Z', '#8acb9d', '#2e9e57', 1], ['M15 7H24L19 15Z', '#f06a5e', '#d13438', 1], ['M4 19H24', '', GREY]] },
  { name: 'Slicer', list: [['M1 1H27V27H1Z', W], ['M2 2H26V5H2Z', SILVER, SILVER], ['M1 6H27'], ['M6 11H10V15H6ZM6 19H10V23H6Z', SILVER, GREY], ...SFUNNEL] },
  { name: 'Table', list: [['M1 1H27V27H1Z', W], ['M2 2H26V5H2Z', SILVER, SILVER], ['M1 6H27M10 6V27M18 6V27M1 13H27M1 20H27', '', GREY, 1], ['M1 1H27V27H1Z']] },
  { name: 'Matrix', list: [['M1 1H27V27H1Z', W], ['M18 6H27V27H1V20H18Z', SKY, SKY, 0], ['M2 2H26V5H2Z', SILVER, SILVER], ['M10 6V27M18 6V27M1 13H27M1 20H27', '', BLUE, 1], ['M1 1H27V27H1ZM1 6H27']] },
  { name: 'R script visual', extra: <text x="12" y="22" textAnchor="middle" fontSize="24" fontWeight="700" fill="#2187d0">R</text> },
  { name: 'Python visual', extra: <text x="13" y="20" textAnchor="middle" fontSize="24" fontWeight="700" fill="#2187d0">Py</text> },
  { name: 'Key influencers', list: [AX, ['M1 6H20', '', BLUE], ['M1 13H15M1 19H8', '', GREY], ['M19 6a3 3 0 0 1 6 0a3 3 0 0 1 -6 0Z', SKY, BLUE], ['M14 13a2 2 0 0 1 4 0a2 2 0 0 1 -4 0ZM8 19a2 2 0 0 1 4 0a2 2 0 0 1 -4 0Z', W, GREY]] },
  { name: 'Decomposition tree', list: [['M10 13H15M18 4H15V23H18M15 13H18'], ['M1 10H10V16H1ZM17 1H27V7H17ZM17 10H27V16H17ZM17 20H27V26H17Z', SKY, BLUE]] },
  { name: 'Q&A', list: [['M1 3H27V19H12L6 26V19H1Z', W, BLUE]] },
  { name: 'Smart narrative', list: [['M3 1H15L23 9V27H3Z', W], ['M14 1V9H23'], ['M9 14H19M8 19H16', '', BLUE], ['M2 11a3 3 0 0 1 6 0a3 3 0 0 1 -6 0Z', SKY, BLUE]] },
  { name: 'Metrics', list: [['M8 4H3Q0 4 1 8Q2 13 9 14M20 4H25Q28 4 27 8Q26 13 19 14', W], ['M7 4V10Q8 18 14 19Q20 18 21 10V4Z', W], ['M14 19V24'], ['M7 1H21V4H7ZM8 24H20V27H8Z', SKY, BLUE]] },
  { name: 'Paginated report', list: [['M3 1H16L24 9V28H3Z', W], ['M16 1V9H24'], ['M6 16h4v9h-4zM12 20h4v5h-4zM18 16h4v9h-4z', INK, INK, 0]] },
  { name: 'Card (new)', list: [['M1 4H27V25H1Z', W], [SBOLT, '#f3f2f1', '#f3f2f1', 4], [SBOLT, '#fbb868', ORANGE], ['M6 21H23', '', GREY]], extra: <text x="15" y="19" textAnchor="middle" fontSize="12" fill="#2a86d1">123</text> },
  { name: 'Slicer (new)', list: [['M15 1H26V12H15ZM1 16H12V26H1Z', W, GREY], ['M8 4H12V12H5', SKY, BLUE], [SBOLT, '#fbb868', ORANGE], ...SFUNNEL] },
  { name: 'ArcGIS map', list: [['M2 2H27V12L18 16L14 27H2Z', '#e2f0fb', BLUE], ['M27 9L20 14L17 22L8 25', '', '#62abe4', 4], ['M0 1H9V9L5 16L0 9Z', ORANGE, ORANGE, 0], ['M3 5a2 2 0 0 1 4 0a2 2 0 0 1 -4 0Z', W, W, 0], ['M20 24a4 4 0 0 1 8 0a4 4 0 0 1 -8 0ZM25 17a2 2 0 0 1 4 0a2 2 0 0 1 -4 0Z', ORANGE, ORANGE, 1]] },
  { name: 'Power Apps', list: [['M10 2H15L18 5L20 2L27 14L19 26L16 25L14 26L10 25L1 14Z', W, PURPLE], ['M15 2L10 8L21 20M11 8L16 14L10 20L16 26M20 5L11 14M23 11L15 20', '', PURPLE]] },
  { name: 'Power Automate', list: [['M1 3H18L27 14L18 25H1L10 14Z', W, '#2187d0'], ['M10 14L18 3M1 25L18 6M10 25L21 12', '', '#2187d0']] },
];

/* ---------- report visuals ---------- */

const PieChart = () => (
  <Chart viewBox="0 0 484 149" role="img" aria-label="Sum of Income by Country">
    <g transform="translate(204.500 69)">
      <path d="M0 0V-54A54 54 0 0 1 36.970 39.360Z" fill="#118dff" />
      <path d="M0 0L36.970 39.360A54 54 0 0 1 -54 0Z" fill="#12239e" />
      <path d="M0 0H-54A54 54 0 0 1 -37.900 -38.500Z" fill="#e66c37" />
      <path d="M0 0L-37.900 -38.500A54 54 0 0 1 0 -54Z" fill="#6b007b" />
      <path d="M51 -20L58 -23H68M-22 51L-25 57H-36M-46 -31L-51 -35H-62M-20 -50L-23 -56H-35" fill="none" stroke="#8a8886" />
    </g>
    <g fill="#605e5c" fontSize="14">
      <text x="277" y="53">$54.46K (38%)</text>
      <text x="166" y="18" textAnchor="end">$17.74K (12.37%)</text>
      <text x="139" y="41" textAnchor="end">$18.05K (12.59%)</text>
      <text x="165" y="131" textAnchor="end">$53.09K (37.04%)</text>
      <text x="398" y="19" fontWeight="600">Country</text>
      {[['Syria', '#118dff'], ['Yemen', '#12239e'], ['Libya', '#e66c37'], ['Iraq', '#6b007b']].map(([name, tone], i) => (
        <g key={name}>
          <circle cx="405" cy={38 + i * 28} r="5" fill={tone} />
          <text x="412" y={43 + i * 28}>{name}</text>
        </g>
      ))}
    </g>
  </Chart>
);

const BARS: [string, number, string][] = [['Syria', 647, '#e66c37'], ['Yemen', 606, PURPLE], ['Iraq', 224, '#118dff'], ['Libya', 224, '#a4317a']];

const BarChart = () => (
  <Chart viewBox="0 0 484 257" role="img" aria-label="Count of Name by Country">
    {[0, 200, 400, 600].map(v => {
      const y = 208 - v * 0.272;
      return (
        <g key={v}>
          <path d={`M64 ${y}H471`} stroke="#cfcfcf" strokeDasharray="1 4" />
          <text x="55" y={y + 5} textAnchor="end" fontSize="13" fontWeight="700" fill="#ae6fb4">{v}</text>
        </g>
      );
    })}
    {BARS.map(([name, value, tone], i) => (
      <g key={name} fontSize="13" fontWeight="700" fill="#ae6fb4" textAnchor="middle">
        <rect x={100 + i * 89} y={208 - value * 0.272} width="68" height={value * 0.272} fill={tone} />
        <text x={134 + i * 89} y={199 - value * 0.272}>{value}</text>
        <text x={135 + i * 89} y="227">{name}</text>
      </g>
    ))}
    <text x="269" y="246" textAnchor="middle" fontSize="13" fill="#252423">Country</text>
    <text transform="translate(24 108) rotate(-90)" textAnchor="middle" fontSize="13" fill="#252423">Count of Name</text>
  </Chart>
);

const MAP_LABELS: [string, number, number, number, boolean][] = [
  ['Valletta', 98, 125, 27, false], ['Nicosia', 705, 150, 31, false], ['ripoli', 65, 308, 36, false], ['Cairo', 637, 415, 36, false],
  ['Baghdad', 1061, 221, 36, false], ['Tehran', 1280, 195, 36, false], ['Riyadh', 1135, 609, 36, false], ['Khartoum', 677, 918, 36, false], ["Sana'a", 983, 927, 36, false],
  ['LEBANON', 770, 220, 26, true], ['SYRIA', 868, 177, 31, true], ['IRAQ', 1045, 289, 31, true], ['JORDAN', 790, 316, 27, true], ['ISRAEL', 740, 351, 27, true],
  ['LIBYA', 192, 482, 31, true], ['EGYPT', 567, 499, 32, true], ['KUWAIT', 1164, 414, 28, true], ['QATAR', 1267, 561, 28, true], ['U.A.E.', 1360, 611, 28, true],
  ['SAUDI ARABIA', 1100, 650, 32, true], ['SUDAN', 613, 838, 32, true], ['CHAD', 232, 917, 32, true], ['ERITREA', 863, 873, 28, true], ['YEMEN', 1139, 884, 31, true],
];

const MapVisual = () => (
  <MapArt viewBox="27 102 1335 843" preserveAspectRatio="xMidYMid slice" role="img" aria-label="Map of name counts">
    <rect x="0" y="80" width="1400" height="900" fill="#efeeec" />
    <g fill="none" stroke="#e0dfdd" strokeWidth="5">
      <path d="M940 700L1010 780L1030 830M1150 150L1230 280L1362 430M1200 120L1300 250M150 690L200 670L230 740M800 480L900 620L960 700M1100 180L1150 240M1230 830L1300 800M900 880L960 930M440 540L500 620M1220 200L1340 340" />
    </g>
    <g fill="#aac5f2">
      <path d="M27 102H560L575 128L610 130L640 108L700 125L760 112L790 120L800 150L785 200L778 250L760 290L752 335L700 330L660 318L610 324L565 341L500 322L440 312L380 292L362 270L330 262L290 275L272 300L278 335L250 362L215 350L190 335L120 325L104 290L60 268L27 262Z" />
      <path d="M673 378L695 410L732 448L750 402L757 420L750 445L790 480L820 540L835 580L885 640L890 690L940 740L975 790L1005 840L1012 890L1022 945H960L930 910L895 880L870 800L830 760L820 660L775 615L770 560L735 500L712 450Z" />
      <path d="M1170 385L1210 352L1245 370L1270 410L1310 450L1362 490V585L1310 600L1283 570L1290 530L1272 520L1268 545L1240 520L1225 480L1195 440Z" />
      <path d="M1020 945V908L1100 930L1190 925L1260 900L1310 855L1362 838V945Z" />
      <path d="M1255 102H1362V116L1300 112ZM637 655L665 630L685 588L697 620L670 645ZM655 770L680 755L670 772Z" />
      <circle cx="616" cy="610" r="6" />
    </g>
    <path d="M388 162L430 172L472 174L430 184L392 172ZM672 180L700 168L738 172L700 194ZM325 102L360 100L350 112Z" fill="#efeeec" />
    <g fill="none" stroke="#8c8c8c" strokeWidth="5" strokeLinejoin="round">
      <path d="M437 310L428 360L434 400V728H402V872L370 876L345 910L350 945M435 660H818M27 610L65 616L90 636L145 610L402 743M113 628L120 680L142 715L130 830L75 900L65 945" />
      <path d="M752 335L755 398L790 402L850 355L825 318L890 292L940 305L1000 340L1070 402L1165 405M880 250L890 292M785 262L820 282L880 246L950 205L960 140L990 105M790 150L830 115L940 110M1080 102L1115 150L1108 200L1165 290L1170 340L1192 372M1165 426H1190M1165 426L1140 400L1160 372L1192 372" />
      <path d="M1285 580L1320 625L1362 630M1010 850L1025 815L1110 820L1150 828L1210 780L1305 765L1362 742M1305 765L1338 840M872 795L822 840L805 945M850 870L910 900L952 945M752 335L770 262" />
      <path d="M640 660L680 655L710 665L775 620" strokeDasharray="8 8" />
    </g>
    {[[98, 143], [705, 172], [54, 262], [636, 370], [1061, 245], [1285, 152], [1135, 562], [679, 876], [1052, 884]].map(([x, y]) => (
      <circle key={x} cx={x} cy={y} r="6" fill="#e0452c" stroke="#fff" strokeWidth="2" />
    ))}
    {MAP_LABELS.map(([name, x, y, size, strong]) => (
      <text key={name} x={x} y={y} textAnchor="middle" fontSize={size} fontWeight={strong ? 700 : 400} fill={strong ? '#1b1b1b' : '#5e5e5e'} stroke="#fff" strokeWidth="3" paintOrder="stroke">{name}</text>
    ))}
    <g strokeWidth="3">
      <circle cx="887" cy="195" r="79" fill="#e66c37" fillOpacity="0.65" stroke="#c8431b" />
      <circle cx="1052" cy="255" r="50" fill="#3fa1f5" fillOpacity="0.65" stroke="#1f7fd0" />
      <circle cx="214" cy="488" r="50" fill="#e78ccb" fillOpacity="0.65" stroke="#c66bab" />
      <circle cx="1172" cy="852" r="77" fill="#8a3091" fillOpacity="0.65" stroke="#6b1577" />
    </g>
    <path d="M39 888h13v13h-13z" fill="#e8562a" /><path d="M53 888h13v13h-13z" fill="#7fba00" /><path d="M39 903h13v13h-13z" fill="#1b9be8" /><path d="M53 903h13v13h-13z" fill="#f8b400" />
    <text x="76" y="911" fontSize="23" fontWeight="600" fill="#777">Microsoft Bing</text>
    <text x="447" y="918" fontSize="23" fontWeight="600" fill="#666" stroke="#fff" strokeWidth="2" paintOrder="stroke">© 2024 TomTom, © 2025 Microsoft Corporation, © <tspan textDecoration="underline">OpenStreetMap</tspan>  Terms</text>
  </MapArt>
);

const KPIS: [string, string, number][] = [['Total of income', '$143.339', 246], ['Total of countries', '4', 212], ['Type of houses', '4', 185], ['Total of females', '5395', 198], ['Total of males', '6510', 175], ['Total of families', '1701', 190]];
const SLICERS: [string[], number][] = [[['Father', 'Mother'], 401], [['Flat', 'House', 'Room', 'Tent'], 388], [['Iraq', 'Libya', 'Syria', 'Yemen'], 412]];

const Report = () => (
  <ReportPage>
    <Row $height={58} $gap={2}>
      {SLICERS.map(([names, grow]) => (
        <Card key={names[0]} $grow={grow}>
          <Slicer $inset={30}>{names.map(n => <SlicerButton key={n}>{n}</SlicerButton>)}</Slicer>
        </Card>
      ))}
    </Row>
    <Row $height={115}>
      {KPIS.map(([title, value, grow]) => (
        <Card key={title} $grow={grow} $glow>
          <CardTitle $compact>{title}</CardTitle>
          <Figure>{value}</Figure>
        </Card>
      ))}
    </Row>
    <Board>
      <Column $grow={492}>
        <Card $grow={195}>
          <CardTitle>Sum of Income by Country</CardTitle>
          <PieChart />
        </Card>
        <Card $grow={310} $glow>
          <CardTitle>Count of Name by Country</CardTitle>
          <BarChart />
        </Card>
      </Column>
      <Column $grow={455}>
        <Card $grow={194}>
          <TableBody>
            <DataTable>
              <colgroup><col width="138" /><col width="158" /><col width="74" /></colgroup>
              <thead>
                <tr><th>Breadwinner</th><th>Sum of Income<Icon w={16} h={8}><path d="M0 0H16L8 8Z" fill="#252423" /></Icon></th><th>House</th></tr>
              </thead>
              <tbody>
                <tr><td>Father</td><td>$31,833</td><td>Room</td></tr>
                <tr><td>Father</td><td>$31,685</td><td>Flat</td></tr>
                <tr><td>Father</td><td>$20,943</td><td>Tent</td></tr>
                <LastRow><td><Clipped>Mother</Clipped></td><td><Clipped>$20,716</Clipped></td><td><Clipped>Flat</Clipped></td></LastRow>
              </tbody>
              <tfoot><tr><td>Total</td><td>$143,339</td><td /></tr></tfoot>
            </DataTable>
            <TableTrack $w={9} $tone="#dedede"><Thumb $h={68} $tone="#8a8886" /></TableTrack>
          </TableBody>
        </Card>
        <MapCard>
          <h2>Count of Name by Country</h2>
          <MapVisual />
        </MapCard>
      </Column>
      <Column $grow={248} $top={2}>
        <Card $grow={238}>
          <CardTitle>Male%</CardTitle>
          <Figure $tall>54.68</Figure>
        </Card>
        <Card $grow={265}>
          <CardTitle>Female %</CardTitle>
          <Figure $tall>45.32</Figure>
        </Card>
      </Column>
    </Board>
  </ReportPage>
);

const Magnifier = ({ tone, flip }: { tone: string; flip?: boolean }) => (
  <Icon w={24} h={24}>
    <g fill="none" stroke={tone} strokeWidth="2">
      {flip ? <><circle cx="10" cy="10" r="8" /><path d="M16 16L22 22" /></> : <><circle cx="15" cy="9" r="8" /><path d="M9 15L1 23" /></>}
    </g>
  </Icon>
);

const Chevrons = ({ left }: { left?: boolean }) => (
  <Icon w={18} h={20} list={[[left ? 'M9 1L1 10L9 19M17 1L9 10L17 19' : 'M1 1L9 10L1 19M9 1L17 10L9 19', '', '#323130']]} />
);

const CaseArt = ({ w, h }: { w: number; h: number }) => (
  <Icon w={w} h={h} box="0 0 46 37">
    <path d="M16 6V3Q16 1 18 1H28Q30 1 30 3V6" fill="none" stroke="#2d2a28" strokeWidth="3" />
    <rect y="6" width="46" height="31" rx="2" fill="#a95f0c" /><rect y="6" width="46" height="17" rx="2" fill="#e08a14" />
    <path d="M0 23H46" stroke="#7a4407" strokeWidth="1" /><rect x="19" y="19" width="8" height="9" fill="#f8cf3c" />
  </Icon>
);

const App = () => (
  <Shell>
    <GlobalStyle />
    <TitleBar>
      <TitleLeft>
        <button aria-label="Save"><Icon w={24} h={24} list={[['M1 1H23V23H5L1 19ZM6 1V10H18V1M7 23V15H17V23M12 18V23', '', '#fff']]} /></button>
        <button aria-label="Undo"><Icon w={22} h={24} list={[['M2 1V10H11M2 10Q10 0 17 4Q24 11 15 19L10 23', '', '#797775']]} /></button>
        <button aria-label="Redo"><Icon w={22} h={24} list={[['M20 1V10H11M20 10Q12 0 5 4Q-2 11 7 19L12 23', '', '#797775']]} /></button>
        <FileName>Eman Assignmet • Last saved: 1/2/2025 at 8:27 PM<Icon w={12} h={8}><path d="M0 0H12L6 8Z" fill="#fff" /></Icon></FileName>
      </TitleLeft>
      <TitleSearch>
        <Magnifier tone="#323130" />
        <PlainInput $size={19} $tone="#3f5a55" placeholder="Search" aria-label="Search" />
      </TitleSearch>
      <TitleRight>
        <Account>Eman Ahmed
          <Icon w={30} h={30}><circle cx="15" cy="15" r="15" fill="#f3f2f1" /><g fill="none" stroke="#000" strokeWidth="2"><circle cx="15" cy="8" r="4" /><path d="M7 15H23Q24 25 15 25Q6 25 7 15Z" /></g></Icon>
        </Account>
        <WindowButton aria-label="Minimize"><Icon w={16} h={16} list={[['M0 8H16', '', '#fff']]} /></WindowButton>
        <WindowButton aria-label="Maximize"><Icon w={16} h={16} list={[['M1 1H15V15H1Z', '', '#fff']]} /></WindowButton>
        <WindowButton aria-label="Close"><Icon w={16} h={16} list={[['M0 0L16 16M16 0L0 16', '', '#fff']]} /></WindowButton>
      </TitleRight>
    </TitleBar>

    <TabRow>
      <TabList>
        {['File', 'Home', 'Insert', 'Modeling', 'View', 'Optimize', 'Help'].map(t => <RibbonTab key={t} $active={t === 'Home'}>{t}</RibbonTab>)}
      </TabList>
      <ShareButton>
        <Icon w={24} h={22} list={[['M4 6H1V21H18V15', '', '#fff'], ['M14 1L23 8L14 15V11Q8 11 5 16Q6 6 14 5Z', '', '#fff']]} />
        <span>Share</span>
        <Icon w={15} h={9} list={[['M1 1L7.500 8L14 1', '', '#fff']]} />
      </ShareButton>
    </TabRow>

    <Ribbon>
      <Group $width={240}>
        <GroupItems>
          <CommandView cmd={['paste', 52, ['Paste'], false, true]} />
          <SmallCommands>
            <SmallCommand><Icon w={24} h={24} list={[['M7 0L15 17M17 0L9 17', '', '#b3b0ad'], ['M5 20a3 3 0 0 1 6 0a3 3 0 0 1 -6 0ZM13 20a3 3 0 0 1 6 0a3 3 0 0 1 -6 0Z', '', '#a9c3e8']]} />Cut</SmallCommand>
            <SmallCommand><Icon w={24} h={24} list={[['M8 20H1V1H9L12 4', '', '#b3b0ad'], ['M9 5H17L23 11V23H9ZM17 5V11H23M13 15H20M13 19H20', '#fff', '#b3b0ad']]} />Copy</SmallCommand>
            <SmallCommand><Icon w={24} h={24} list={[['M1 11L8 8L17 17L12 23Z', '#fdeed8', '#efc59d'], ['M9 8L13 4L15 6L20 1L23 4L18 9L20 12L17 16Z', '#fff', '#b3b0ad']]} />Format painter</SmallCommand>
          </SmallCommands>
        </GroupItems>
        <GroupName>Clipboard</GroupName>
      </Group>
      {GROUPS.map(g => (
        <Group key={g.name} $width={g.width}>
          <GroupItems>{g.cmds.map(c => <CommandView key={c[0]} cmd={c} />)}</GroupItems>
          <GroupName>{g.name}</GroupName>
        </Group>
      ))}
      <Collapse aria-label="Collapse the ribbon"><Icon w={14} h={9} list={[['M1 8L7 2L13 8', '', INK, 3]]} /></Collapse>
    </Ribbon>

    <Workspace>
      <Rail>
        <RailButton $active aria-label="Report view"><Icon w={22} h={22} list={[['M1 0V20H22', '', '#111'], ['M5 5H8V17H5ZM11 9H14V17H11ZM17 2H20V17H17Z', '', '#111']]} /></RailButton>
        <RailButton aria-label="Table view"><Icon w={24} h={24} list={[['M1 1H23V23H1ZM1 6H23M8 6V23M16 6V23M1 12H23M1 17H23', '', GREY]]} /></RailButton>
        <RailButton aria-label="Model view"><Icon w={28} h={28} list={[['M1 9H12V20H1ZM1 13H12M16 1H27V12H16ZM16 5H27M16 16H27V27H16ZM16 20H27M7 9V4H16M7 20V24H16', '', GREY]]} /></RailButton>
        <RailButton aria-label="DAX query view"><Icon w={28} h={26}><Shapes list={[['M7 14V1H15L21 7V23M15 1V7H21M24 8Q28 16 22 24', '', GREY]]} /><text x="0" y="25" fontSize="11" fontWeight="600" fill={GREY} stroke="#f3f2f1" strokeWidth="3" paintOrder="stroke">DAX</text></Icon></RailButton>
      </Rail>

      <Center>
        <CanvasRow>
          <Canvas><Report /></Canvas>
          <FiltersPane>
            <button aria-label="Expand filters"><Chevrons left /></button>
            <FunnelSlot><Icon w={18} h={18} list={[['M17 1V17L8 11H1V6H8Z', '', '#252423']]} /></FunnelSlot>
            <VerticalLabel>Filters</VerticalLabel>
          </FiltersPane>
        </CanvasRow>
        <PageTabs>
          <Layouts>
            <ViewButton $active aria-label="Desktop layout"><Icon w={28} h={26} list={[['M1 5H27V19H1ZM14 19V24M8 24H20', '', '#605e5c']]} /></ViewButton>
            <ViewButton aria-label="Mobile layout"><Icon w={20} h={30} list={[['M1 1H19V29H1ZM8 25H12', '', '#605e5c']]} /></ViewButton>
          </Layouts>
          <Pager aria-label="Previous page"><Icon w={7} h={12}><path d="M7 0V12L0 6Z" fill="#c8c6c4" /></Icon></Pager>
          <Pager aria-label="Next page"><Icon w={7} h={12}><path d="M0 0V12L7 6Z" fill="#c8c6c4" /></Icon></Pager>
          <PageTab $active>Page 1</PageTab>
          <PageTab>Page 2</PageTab>
          <AddPage aria-label="New page"><Icon w={18} h={18} list={[['M9 1V17M1 9H17', '', '#fff', 5]]} /></AddPage>
        </PageTabs>
      </Center>

      <Pane>
        <PaneHead><h2>Visualizations</h2><button aria-label="Collapse visualizations"><Chevrons /></button></PaneHead>
        <BuildLabel>Build visual</BuildLabel>
        <ModeButtons>
          <ModeButton $active aria-label="Build visual"><Icon w={36} h={36}><path d="M0 1H29" stroke={INK} strokeWidth="2" /><g fill={GREEN} stroke={INK} strokeWidth="2" strokeDasharray="3 2"><rect x="1" y="8" width="34" height="11" /><rect x="1" y="24" width="34" height="11" /></g></Icon></ModeButton>
          <ModeButton aria-label="Format visual"><Icon w={36} h={36} list={[['M6 35H1V1H16L26 12M16 1V12H26', '', '#252423'], ['M35 13Q22 24 20 28L23 30Q30 25 35 13ZM20 27Q14 26 13 32Q12 34 9 34Q20 38 23 30', '#fff', '#252423']]} /></ModeButton>
        </ModeButtons>
        <svg width="270" height="13" aria-hidden="true"><path d="M0 12H24L36 1L48 12H270" transform="translate(0 6)" fill="none" stroke="#8a8886" strokeWidth="2" /></svg>
        <Gallery>
          {GALLERY.map(g => <button key={g.name} aria-label={g.name}><Icon w={28} h={28} list={g.list}>{g.extra}</Icon></button>)}
        </Gallery>
        <Dots aria-label="Get more visuals"><Icon w={22} h={4}><path d="M0 0h3v3h-3zM9 0h3v3h-3zM18 0h3v3h-3z" fill="#252423" /></Icon></Dots>
        <Wells>
          <WellList>
            <WellLabel>Values</WellLabel>
            <DropBox>Add data fields here</DropBox>
            <WellLabel $strong>Drill through</WellLabel>
            <ToggleRow>Cross-report<ToggleInput type="checkbox" /><Toggle>Off</Toggle></ToggleRow>
            <ToggleRow>Keep all filters<ToggleInput type="checkbox" defaultChecked /><Toggle $on>On</Toggle></ToggleRow>
            <CutBox />
          </WellList>
          <ScrollTrack $w={9} $tone="transparent"><Thumb $h={190} $tone="#d2d0ce" /></ScrollTrack>
        </Wells>
      </Pane>

      <Pane>
        <PaneHead><h2>Data</h2><button aria-label="Collapse data"><Chevrons /></button></PaneHead>
        <SearchField><Magnifier tone="#605e5c" flip /><PlainInput $size={19} $tone="#6f6d6b" placeholder="Search" aria-label="Search data" /></SearchField>
        <TreeItem><Icon w={10} h={18} list={[['M1 1L9 9L1 17', '', '#605e5c', 1]]} /><Icon w={18} h={18} list={[['M4 1H14Q17 1 17 4V14Q17 17 14 17H4Q1 17 1 14V4Q1 1 4 1ZM6 1V17M12 1V17M1 6H17M1 12H17', '', '#323130']]} />Needs</TreeItem>
      </Pane>
    </Workspace>

    <StatusBar>
      <span>Page 1 of 2</span>
      <ZoomTools>
        <button aria-label="Zoom out">-</button>
        <ZoomSlider type="range" min={10} max={190} defaultValue={63} aria-label="Zoom" />
        <button aria-label="Zoom in">+</button>
        <output>63%</output>
        <button aria-label="Fit to page"><Icon w={24} h={18} list={[['M1 1H23V17H1Z', '', '#605e5c'], ['M5 7V4H8M16 4H19V7M19 11V14H16M8 14H5V11', '', '#605e5c']]} /></button>
      </ZoomTools>
    </StatusBar>

    <Taskbar>
      <StartButton aria-label="Start"><Icon w={24} h={24}><path d="M0 3L11 2V11H0ZM12 2L24 0V11H12ZM0 12H11V22L0 21ZM12 12H24V24L12 22Z" fill="#fff" /></Icon></StartButton>
      <TaskSearch>
        <Magnifier tone="#252423" />
        <PlainInput $size={21} $tone="#323130" placeholder="Type here to search" aria-label="Type here to search" />
        <Briefcase><CaseArt w={46} h={37} /></Briefcase>
      </TaskSearch>
      <TaskButton aria-label="Task view"><Icon w={24} h={24} list={[['M1 0V4H16V0M1 24V20H16V24M1 7H16V17H1ZM22 0V5M22 7V10M22 13V24', '', '#fff']]} /></TaskButton>
      <TaskButton aria-label="Copilot"><Icon w={36} h={36} box="0 0 48 48"><CopilotArt id="tb" /></Icon></TaskButton>
      <TaskButton aria-label="Edge"><Icon w={36} h={36}>
        <path d="M0 19Q1 1 18 0Q36 1 36 16Q34 24 25 24Q21 23 23 19Q22 12 15 12Q4 12 0 19Z" fill="#35b8e0" /><path d="M22 1Q36 4 36 16Q34 24 25 24Q21 23 23 19Q28 8 22 1Z" fill="#48c78a" />
        <path d="M0 19Q4 11 15 12Q10 16 12 24Q18 34 32 28Q26 37 16 36Q2 34 0 19Z" fill="#1560b3" />
        <rect y="24" width="18" height="12" fill="#b5670f" /><rect y="24" width="18" height="6" fill="#e08a14" /><rect x="7" y="28" width="4" height="4" fill="#f8cf3c" />
      </Icon></TaskButton>
      <TaskButton $open aria-label="File Explorer"><Icon w={32} h={30}><path d="M0 2Q0 0 2 0H12L15 3H30Q32 3 32 5V27H0Z" fill="#e8a317" /><path d="M0 7H32V27H0Z" fill="#fbd25c" /><path d="M6 29V18Q6 15 9 15H23Q26 15 26 18V29H20V22H12V29Z" fill="#3b8ede" /></Icon></TaskButton>
      <TaskButton aria-label="Microsoft Store"><Icon w={34} h={34}><path d="M9 6V1H25V6" fill="none" stroke="#2ea3e8" strokeWidth="2" /><rect y="4" width="34" height="30" rx="4" fill="#f5f5f5" /><path d="M9 11h7v7h-7z" fill="#e8502a" /><path d="M18 11h7v7h-7z" fill="#7fba00" /><path d="M9 20h7v7h-7z" fill="#1f8fe8" /><path d="M18 20h7v7h-7z" fill="#f8b400" /></Icon></TaskButton>
      <TaskButton aria-label="Outlook"><Icon w={36} h={32}><path d="M8 8L20 0L36 10V28Q36 32 32 32H12Q8 32 8 28Z" fill="#2b8fe0" /><path d="M8 16L36 10V28Q36 32 32 32H12Z" fill="#39c0f0" /><rect y="9" width="19" height="18" rx="2" fill="#1065b8" /><ellipse cx="9" cy="18" rx="4" ry="5" fill="none" stroke="#fff" strokeWidth="2" /></Icon></TaskButton>
      <TaskButton $open aria-label="Chrome"><Icon w={36} h={36}><circle cx="18" cy="18" r="18" fill="#fbc116" /><path d="M2 10A18 18 0 0 1 34 10H18L10 20Z" fill="#e33b2e" /><path d="M2 10A18 18 0 0 0 16 36L24 22H12Z" fill="#2aa04a" /><circle cx="18" cy="18" r="9" fill="#fff" /><circle cx="18" cy="18" r="7" fill="#2f7de1" /></Icon></TaskButton>
      <TaskButton $open $current aria-label="Power BI"><Icon w={27} h={36}><rect x="14" width="13" height="36" rx="1" fill="#d98a0c" /><rect x="14" width="8" height="36" fill="#e9b31d" /><rect x="7" y="9" width="13" height="27" fill="#efc32f" /><rect y="18" width="13" height="18" fill="#f9d96b" /></Icon></TaskButton>
      <TaskButton aria-label="Viewer"><Icon w={32} h={36} list={[['M12 2L2 8V22M5 28L16 34L30 26V20M30 14V9L16 1M16 8L24 12V22L16 27L8 22V12ZM8 12L16 17L24 12M16 17V27', '', '#fff']]} width={2} /></TaskButton>
      <TaskButton $open aria-label="Excel"><Icon w={35} h={32}><rect x="9" width="26" height="32" rx="2" fill="#1f8f50" /><path d="M22 0H33Q35 0 35 2V10H22Z" fill="#3ec37b" /><path d="M9 22H35V30Q35 32 33 32H9Z" fill="#17593a" /><rect y="7" width="19" height="18" rx="1" fill="#107c41" /><text x="9.500" y="22" textAnchor="middle" fontSize="15" fontWeight="700" fill="#fff">X</text></Icon></TaskButton>
      <Tray>
        <Weather><Icon w={33} h={33}><circle cx="15" cy="18" r="15" fill="#f09a1a" /><circle cx="15" cy="12" r="8" fill="#f8b93a" /><circle cx="24" cy="8" r="9" fill="#c93a2b" /><text x="24" y="13" textAnchor="middle" fontSize="12" fill="#fff">1</text></Icon>20°C</Weather>
        <TrayButton aria-label="Show hidden icons"><Icon w={18} h={11} list={[['M1 10L9 1L17 10', '', '#fff']]} /></TrayButton>
        <TrayButton aria-label="Meet now"><Icon w={18} h={22} list={[['M1 6H11V17H1ZM11 11L16 7V16L11 13M3 2Q8 -1 13 2M3 21Q8 24 13 21', '', '#fff', 1]]} /></TrayButton>
        <TrayButton aria-label="Battery"><Icon w={24} h={14} list={[['M1 1H21V13H1Z', '', '#fff'], ['M23 5V9', '', '#fff'], ['M3 3H11V11H3Z', '#fff', '#fff', 0]]} /></TrayButton>
        <TrayButton aria-label="Volume"><Icon w={24} h={20} list={[['M1 6H5L11 1V19L5 14H1ZM14 7Q16 10 14 13M17 4Q21 10 17 16M20 1Q26 10 20 19', '', '#fff', 1]]} /></TrayButton>
        <TrayButton aria-label="Network"><Icon w={20} h={20} list={[['M1 19Q2 2 19 1M6 19Q7 7 19 6M11 19Q12 12 19 11', '', '#ddd', 1], ['M15 16h3v3h-3z', '#fff', '#fff', 0]]} /></TrayButton>
        <TrayLanguage>ع</TrayLanguage>
        <Clock>4:24 PM<br />1/7/2025</Clock>
        <Notify aria-label="Notifications"><Icon w={36} h={36}><path d="M0 0H24V19H12L8 24V19H0Z" fill="#fff" /><path d="M5 5H19M5 9H19M5 13H15" stroke="#2b2626" strokeWidth="2" /><circle cx="24" cy="24" r="11" fill="#333" stroke="#999" /><text x="24" y="30" textAnchor="middle" fontSize="16" fontWeight="600" fill="#fff">2</text></Icon></Notify>
      </Tray>
    </Taskbar>
    <Watermark aria-hidden="true"><span>مستقل</span><b>mostaql.com</b></Watermark>
  </Shell>
);

export default App;
